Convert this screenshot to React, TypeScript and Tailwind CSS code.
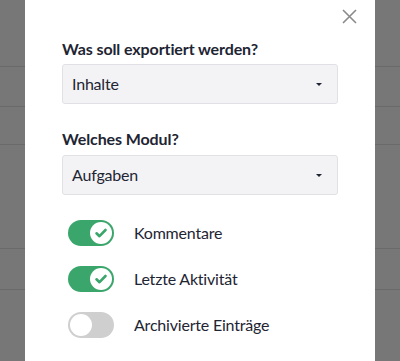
import React from "react";

function Strip() {
  return (
    <div className="flex w-[25px] flex-col bg-[#777777]">
      <div className="h-[67px] border-b border-[#6a6a6a]" />
      <div className="h-[40px] border-b border-[#6a6a6a]" />
      <div className="h-[38px] border-b border-[#6a6a6a]" />
      <div className="h-[104px] border-b border-[#6a6a6a]" />
      <div className="h-[41px] border-b border-[#6a6a6a]" />
      <div className="flex-1" />
    </div>
  );
}

function Select({ value }: { value: string }) {
  return (
    <div className="flex h-[40px] items-center justify-between rounded-[3px] border border-[#e1e1e5] bg-[#f3f3f5] pl-[9px] pr-[15px]">
      <span className="text-[16px] tracking-[-0.2px] text-[#1e2533]">{value}</span>
      <svg width="6" height="3" viewBox="0 0 6 3">
        <path d="M0 0h6L3 3z" fill="#1e2533" />
      </svg>
    </div>
  );
}

function Toggle({ on, label }: { on: boolean; label: string }) {
  return (
    <div className="flex items-center">
      <div
        className={
          on
            ? "flex h-[26px] w-[46px] items-center justify-end rounded-full bg-[#3ba66b] px-[2px]"
            : "flex h-[26px] w-[46px] items-center justify-start rounded-full bg-[#cfcfcf] px-[2px]"
        }
      >
        <div className="flex h-[22px] w-[22px] items-center justify-center rounded-full bg-white">
          {on && (
            <svg width="14" height="14" viewBox="0 0 14 14">
              <path
                d="M2.5 7.3l3 2.9L11.5 4"
                fill="none"
                stroke="#3ba66b"
                strokeWidth="2.6"
                strokeLinecap="round"
                strokeLinejoin="round"
              />
            </svg>
          )}
        </div>
      </div>
      <span className="ml-[20px] text-[16px] tracking-[-0.2px] text-[#1e2533]">{label}</span>
    </div>
  );
}

export default function App() {
  return (
    <div
      className="flex h-[361px] w-[400px] overflow-hidden"
      style={{ fontFamily: "Lato, 'Open Sans', sans-serif" }}
    >
      <Strip />
      <div className="relative flex w-[350px] flex-col bg-white px-[37px] pt-[37px]">
        <svg
          className="absolute right-[18px] top-[9px]"
          width="15"
          height="15"
          viewBox="0 0 15 15"
        >
          <path d="M1 1l13 13M14 1L1 14" stroke="#8a8a8a" strokeWidth="1.6" />
        </svg>
        <div className="mb-[3px] text-[16px] font-bold leading-[24px] tracking-[-0.1px] text-[#1e2533]">
          Was soll exportiert werden?
        </div>
        <Select value="Inhalte" />
        <div className="mb-[4px] mt-[23px] text-[16px] font-bold leading-[24px] tracking-[-0.1px] text-[#1e2533]">
          Welches Modul?
        </div>
        <Select value="Aufgaben" />
        <div className="mt-[25px] flex flex-col gap-[20px] pl-[6px]">
          <Toggle on label="Kommentare" />
          <Toggle on label="Letzte Aktivität" />
          <Toggle on={false} label="Archivierte Einträge" />
        </div>
      </div>
      <Strip />
    </div>
  );
}
